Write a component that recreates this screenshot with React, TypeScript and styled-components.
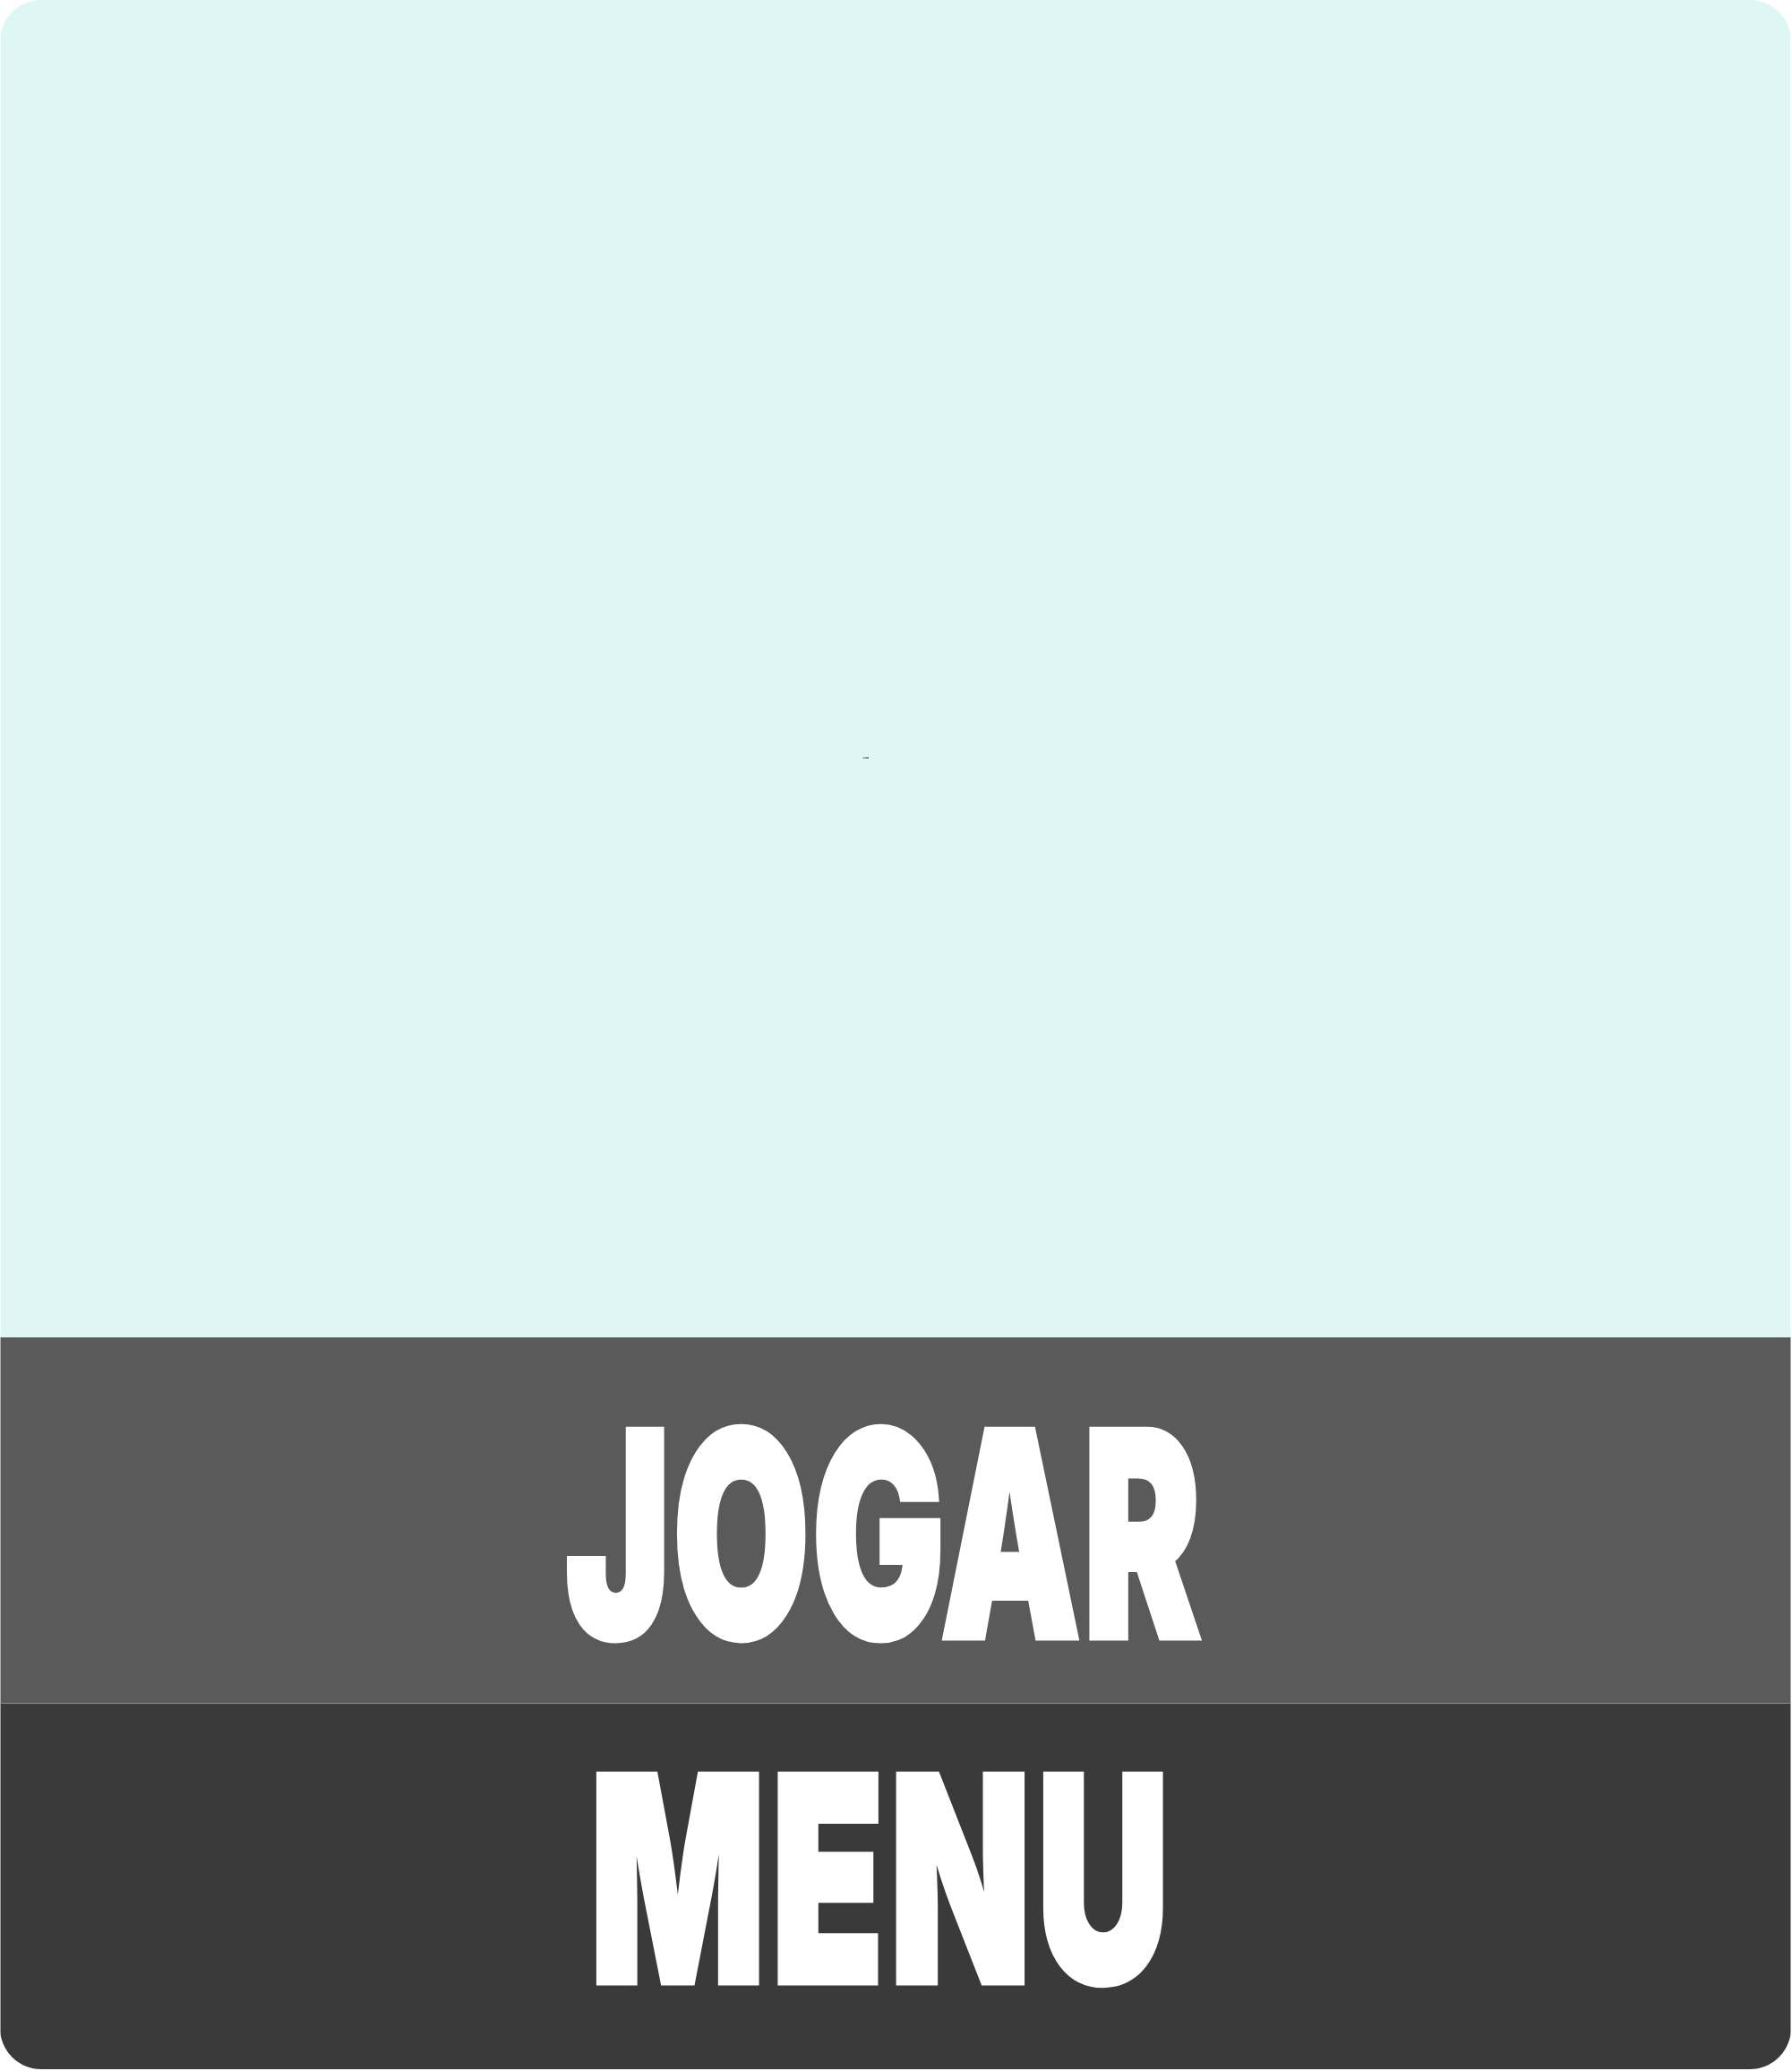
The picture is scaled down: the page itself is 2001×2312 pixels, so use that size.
import React from "react";
import styled, { createGlobalStyle } from "styled-components";

const GlobalStyle = createGlobalStyle`
  html, body {
    margin: 0;
    padding: 0;
    background: #ffffff;
  }
  body {
    font-family: "Liberation Sans", Arial, sans-serif;
  }
`;

const Panel = styled.div`
  box-sizing: border-box;
  width: 2000px;
  height: 2310px;
  display: flex;
  flex-direction: column;
  border-radius: 46px;
  overflow: hidden;
`;

const Canvas = styled.div`
  position: relative;
  flex: 1;
  background: #dff7f4;
  border-left: 1px solid rgba(255, 255, 255, 0.6);
  border-right: 1px solid rgba(255, 255, 255, 0.6);
`;

const Mark = styled.div`
  position: absolute;
  left: 962px;
  top: 845px;
  width: 7px;
  height: 2px;
  background: linear-gradient(90deg, #b9c9c6, #6f7f7c);
`;

const ActionBar = styled.button<{ $tone: "mid" | "dark"; $padTop: number; $padBottom: number; $padRight: number }>`
  box-sizing: border-box;
  display: flex;
  align-items: center;
  justify-content: center;
  height: ${(p) => (p.$tone === "mid" ? 408 : 409)}px;
  flex: none;
  margin: 0;
  padding: ${(p) => p.$padTop}px ${(p) => p.$padRight}px ${(p) => p.$padBottom}px 0;
  border: none;
  border-left: 1px solid rgba(255, 255, 255, 0.5);
  border-right: 1px solid rgba(255, 255, 255, 0.5);
  border-top: ${(p) => (p.$tone === "dark" ? "1px solid #8c8c8c" : "none")};
  background: ${(p) => (p.$tone === "mid" ? "#5a5a5a" : "#3a3a3a")};
  cursor: pointer;
`;

const Label = styled.span<{ $sx: number; $sy: number; $spacing: number }>`
  display: inline-block;
  font-family: Inter, "Liberation Sans", Arial, sans-serif;
  font-weight: 900;
  font-size: 250px;
  line-height: 1;
  letter-spacing: ${(p) => p.$spacing}px;
  color: #ffffff;
  -webkit-text-stroke: 6px #ffffff;
  white-space: nowrap;
  transform: scale(${(p) => p.$sx}, ${(p) => p.$sy});
  transform-origin: center center;
`;

export default function App() {
  return (
    <>
      <GlobalStyle />
      <Panel>
        <Canvas>
          <Mark />
        </Canvas>
        <ActionBar $tone="mid" $padTop={30} $padBottom={0} $padRight={24}>
          <Label $sx={0.785} $sy={1.27} $spacing={4}>JOGAR</Label>
        </ActionBar>
        <ActionBar $tone="dark" $padTop={0} $padBottom={18} $padRight={29}>
          <Label $sx={0.82} $sy={1.27} $spacing={8}>MENU</Label>
        </ActionBar>
      </Panel>
    </>
  );
}
